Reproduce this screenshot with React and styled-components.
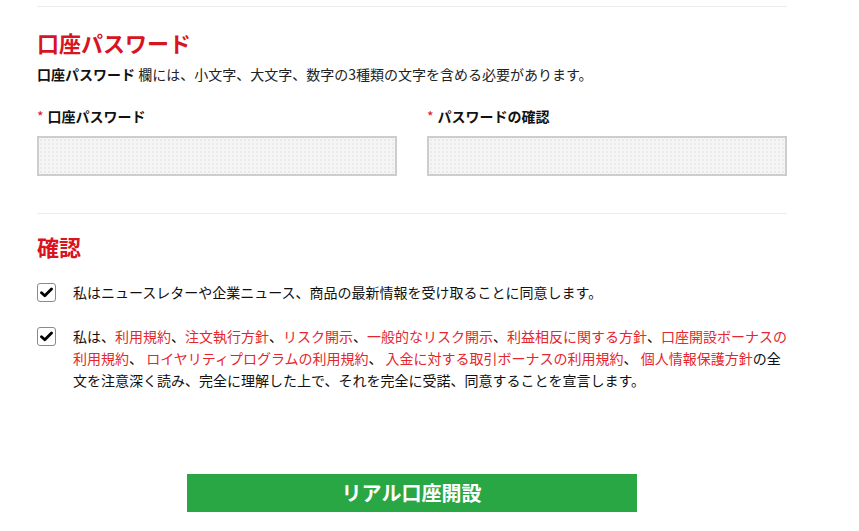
import React from "react";
import styled, { createGlobalStyle } from "styled-components";

const Global = createGlobalStyle`
  html, body { margin: 0; padding: 0; background: #fff; }
  body {
    font-family: "Noto Sans CJK JP", "Noto Sans", "Liberation Sans", sans-serif;
    color: #111;
  }
`;

const Page = styled.div`
  width: 750px;
  margin-left: 37px;
  display: flex;
  flex-direction: column;
`;

const Divider = styled.div`
  height: 1px;
  background: #ececec;
  margin-top: ${(p) => p.$top}px;
`;

const Heading = styled.h2`
  margin: ${(p) => p.$top}px 0 0;
  font-size: 22px;
  line-height: 30px;
  font-weight: 700;
  color: #d7141f;
`;

const Desc = styled.p`
  margin: 7px 0 0;
  font-size: 14px;
  line-height: 20px;
  color: #222;
  b { font-weight: 700; color: #111; }
`;

const FieldGrid = styled.div`
  margin-top: 22px;
  display: grid;
  grid-template-columns: 360px 360px;
  column-gap: 30px;
`;

const Field = styled.div`
  display: flex;
  flex-direction: column;
  gap: 10px;
`;

const Label = styled.label`
  font-size: 14px;
  line-height: 20px;
  font-weight: 700;
  color: #111;
  span { color: #d7141f; margin-right: 4px; font-weight: 400; }
`;

const Input = styled.input`
  box-sizing: border-box;
  width: 360px;
  height: 40px;
  border: 2px solid #cdcdcd;
  background-color: #f5f5f5;
  background-image: radial-gradient(circle, #ebebeb 0.8px, transparent 1px);
  background-size: 4px 4px;
  outline: none;
  margin: 0;
`;

const Row = styled.div`
  display: flex;
  align-items: flex-start;
  gap: 17px;
  margin-top: ${(p) => p.$top}px;
`;

const Box = styled.div`
  box-sizing: border-box;
  flex: 0 0 19px;
  width: 19px;
  height: 19px;
  margin-top: 2px;
  border: 1px solid #8a8a8a;
  border-radius: 3px;
  background: #fff;
  display: flex;
  align-items: center;
  justify-content: center;
`;

const RowText = styled.p`
  margin: 0;
  width: 716px;
  font-size: 14px;
  line-height: 22px;
  color: #111;
`;

const Link = styled.a`
  color: #e5262d;
  text-decoration: none;
`;

const ButtonWrap = styled.div`
  display: flex;
  justify-content: center;
  margin-top: 83px;
  padding-right: 1px;
`;

const Submit = styled.button`
  width: 450px;
  height: 38px;
  border: none;
  background: #29a744;
  color: #fff;
  font-family: "Noto Sans CJK JP", sans-serif;
  font-size: 20px;
  font-weight: 700;
  line-height: 38px;
  padding: 0;
`;

const Check = () => (
  <svg width="13" height="11" viewBox="0 0 13 11">
    <path d="M1.5 5.8 L4.8 8.8 L11.5 2" fill="none" stroke="#000" strokeWidth="2.8" strokeLinecap="round" strokeLinejoin="round" />
  </svg>
);

export default function App() {
  return (
    <>
      <Global />
      <Page>
        <Divider $top={6} />
        <Heading $top={20}>口座パスワード</Heading>
        <Desc>
          <b>口座パスワード</b> 欄には、小文字、大文字、数字の3種類の文字を含める必要があります。
        </Desc>
        <FieldGrid>
          <Field>
            <Label><span>*</span>口座パスワード</Label>
            <Input type="password" />
          </Field>
          <Field>
            <Label><span>*</span>パスワードの確認</Label>
            <Input type="password" />
          </Field>
        </FieldGrid>
        <Divider $top={37} />
        <Heading $top={17}>確認</Heading>
        <Row $top={20}>
          <Box><Check /></Box>
          <RowText>私はニュースレターや企業ニュース、商品の最新情報を受け取ることに同意します。</RowText>
        </Row>
        <Row $top={22}>
          <Box><Check /></Box>
          <RowText>
            私は、<Link>利用規約</Link>、<Link>注文執行方針</Link>、<Link>リスク開示</Link>、<Link>一般的なリスク開示</Link>、<Link>利益相反に関する方針</Link>、<Link>口座開設ボーナスの利用規約</Link>、 <Link>ロイヤリティプログラムの利用規約</Link>、 <Link>入金に対する取引ボーナスの利用規約</Link>、 <Link>個人情報保護方針</Link>の全文を注意深く読み、完全に理解した上で、それを完全に受諾、同意することを宣言します。
          </RowText>
        </Row>
        <ButtonWrap>
          <Submit>リアル口座開設</Submit>
        </ButtonWrap>
      </Page>
    </>
  );
}
